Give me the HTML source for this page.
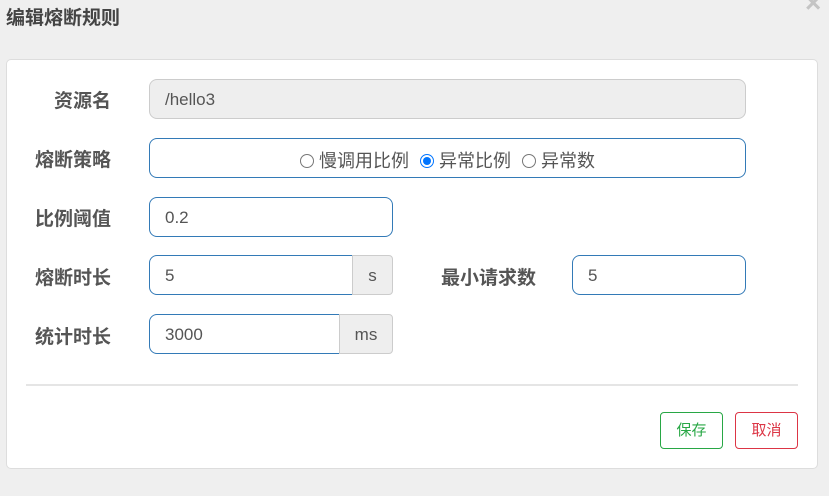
<!DOCTYPE html>
<html><head><meta charset="utf-8"><style>
*{box-sizing:border-box;margin:0;padding:0}
body{width:829px;height:496px;background:#efefef;font-family:"Liberation Sans","Noto Sans CJK SC",sans-serif;position:relative;overflow:hidden;color:#555}
.a{position:absolute}
.title{left:6px;top:7px;font-size:19px;font-weight:bold;color:#444;line-height:24px}
.close{left:805px;top:-11px;font-size:28px;font-weight:bold;color:#c4c4c4;line-height:28px}
.card{left:6px;top:59px;width:812px;height:410px;background:#fff;border:1px solid #ddd;border-radius:5px}
.lbl{font-size:19px;font-weight:bold;color:#555;line-height:24px;width:100px;text-align:right}
.in{border:1px solid #337ab7;border-radius:8px;height:40px;font-size:17px;line-height:40px;padding-left:15px;color:#555;background:#fff}
.add{border:1px solid #ccc;background:#eee;height:40px;font-size:17px;line-height:40px;text-align:center;color:#555;border-radius:0 4px 4px 0}
.r{display:inline-block;width:14px;height:14px;border:1px solid #777;border-radius:50%;vertical-align:-1px;margin-right:5px;position:relative}
.r.on{border:1px solid #0075ff;}
.r.on:after{content:"";position:absolute;left:2px;top:2px;width:8px;height:8px;border-radius:50%;background:#0075ff}
.btn{height:37px;width:63px;border-radius:4px;font-size:15px;line-height:35px;text-align:center;background:#fff}
</style></head><body>
<div class="a title">编辑熔断规则</div>
<div class="a close">×</div>
<div class="a card"></div>
<div class="a lbl" style="left:11px;top:90px">资源名</div>
<div class="a in" style="left:149px;top:79px;width:597px;background:#eee;border-color:#ccc">/hello3</div>
<div class="a lbl" style="left:11px;top:149px">熔断策略</div>
<div class="a in" style="left:149px;top:138px;width:597px;padding:2px 0 0 0;text-align:center;font-size:18px;line-height:40px"><span class="r"></span>慢调用比例 <span class="r on" style="margin-left:6px"></span>异常比例 <span class="r" style="margin-left:6px"></span>异常数</div>
<div class="a lbl" style="left:11px;top:208px">比例阈值</div>
<div class="a in" style="left:149px;top:197px;width:244px">0.2</div>
<div class="a lbl" style="left:11px;top:267px">熔断时长</div>
<div class="a in" style="left:149px;top:255px;width:204px;border-radius:8px 0 0 8px">5</div>
<div class="a add" style="left:352px;top:255px;width:41px">s</div>
<div class="a lbl" style="left:441px;top:267px;width:120px;text-align:left">最小请求数</div>
<div class="a in" style="left:572px;top:255px;width:174px">5</div>
<div class="a lbl" style="left:11px;top:326px">统计时长</div>
<div class="a in" style="left:149px;top:314px;width:191px;border-radius:8px 0 0 8px">3000</div>
<div class="a add" style="left:339px;top:314px;width:54px">ms</div>
<div class="a" style="left:26px;top:384px;width:772px;height:2px;background:#e5e5e5"></div>
<div class="a btn" style="left:660px;top:412px;border:1px solid #28a745;color:#28a745">保存</div>
<div class="a btn" style="left:735px;top:412px;border:1px solid #dc3545;color:#dc3545">取消</div>
</body></html>
